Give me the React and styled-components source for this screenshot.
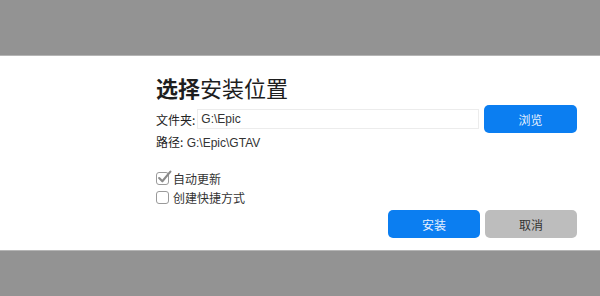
import React, { useState } from "react";
import styled, { createGlobalStyle } from "styled-components";

const GlobalStyle = createGlobalStyle`
  html, body {
    margin: 0;
    padding: 0;
    background: #939393;
    font-family: "Liberation Sans", "Noto Sans CJK SC", sans-serif;
  }
`;

const Screen = styled.div`
  width: 600px;
  height: 296px;
  padding-top: 55px;
  box-sizing: border-box;
`;

const Dialog = styled.div`
  height: 196px;
  background: #ffffff;
  border-top: 1px solid #b5b5b5;
  border-bottom: 1px solid #b5b5b5;
  box-sizing: border-box;
  padding: 18px 0 0 156px;
`;

const Content = styled.div`
  width: 421px;
  display: flex;
  flex-direction: column;
`;

const Title = styled.h1`
  margin: 0;
  font-size: 22px;
  line-height: 26px;
  font-weight: 400;
  color: #1e1e1e;
  font-family: "Noto Sans CJK SC", sans-serif;

  b {
    font-weight: 700;
  }
`;

const FolderRow = styled.div`
  margin-top: 5px;
  display: flex;
  align-items: center;
  height: 28px;
`;

const Label = styled.span`
  font-size: 12px;
  color: #222;
  font-family: "Noto Sans CJK SC", sans-serif;
  white-space: nowrap;
`;

const PathInput = styled.input`
  width: 282px;
  height: 20px;
  box-sizing: border-box;
  margin-left: 2px;
  border: 1px solid #ececec;
  padding: 0 3px;
  font-size: 12px;
  font-family: "Liberation Sans", "Noto Sans CJK SC", sans-serif;
  color: #333;
  outline: none;
`;

const Button = styled.button`
  width: 92px;
  height: 28px;
  border: none;
  border-radius: 5px;
  background: ${(p) => (p.$secondary ? "#bdbdbd" : "#0b7ef1")};
  color: ${(p) => (p.$secondary ? "#333" : "#e6f1ff")};
  font-size: 12px;
  font-family: "Noto Sans CJK SC", sans-serif;
  padding: 0;
  cursor: pointer;
`;

const BrowseButton = styled(Button)`
  margin-left: auto;
  width: 93px;
`;

const PathText = styled.div`
  margin-top: 1px;
  font-size: 12px;
  line-height: 16px;
  color: #333;
`;

const Options = styled.div`
  margin-top: 18px;
  display: flex;
  flex-direction: column;
`;

const Option = styled.label`
  display: flex;
  align-items: center;
  height: 19px;
  gap: 4px;
  font-size: 12px;
  color: #333;
  font-family: "Noto Sans CJK SC", sans-serif;
  cursor: pointer;
`;

const Box = styled.span`
  position: relative;
  width: 13px;
  height: 13px;
  border: 1px solid #9a9a9a;
  border-radius: 3px;
  box-sizing: border-box;
  background: #fff;
  flex: none;

  svg {
    position: absolute;
    left: 0px;
    top: -3px;
  }
`;

const Actions = styled.div`
  margin-top: 3px;
  display: flex;
  justify-content: flex-end;
  gap: 5px;
`;

const Check = ({ checked }) => (
  <Box>
    {checked && (
      <svg width="15" height="15" viewBox="0 0 14 14">
        <path
          d="M2 7.5 L5 10.5 L12.5 1.5"
          fill="none"
          stroke="#8a8a8a"
          strokeWidth="2"
          strokeLinecap="round"
          strokeLinejoin="round"
        />
      </svg>
    )}
  </Box>
);

export default function App() {
  const [autoUpdate, setAutoUpdate] = useState(true);
  const [shortcut, setShortcut] = useState(false);

  return (
    <Screen>
      <GlobalStyle />
      <Dialog>
        <Content>
          <Title>
            <b>选择</b>安装位置
          </Title>
          <FolderRow>
            <Label>文件夹:</Label>
            <PathInput defaultValue="G:\Epic" />
            <BrowseButton>浏览</BrowseButton>
          </FolderRow>
          <PathText>
            <Label>路径:</Label> G:\Epic\GTAV
          </PathText>
          <Options>
            <Option onClick={() => setAutoUpdate(!autoUpdate)}>
              <Check checked={autoUpdate} />
              自动更新
            </Option>
            <Option onClick={() => setShortcut(!shortcut)}>
              <Check checked={shortcut} />
              创建快捷方式
            </Option>
          </Options>
          <Actions>
            <Button>安装</Button>
            <Button $secondary>取消</Button>
          </Actions>
        </Content>
      </Dialog>
    </Screen>
  );
}
